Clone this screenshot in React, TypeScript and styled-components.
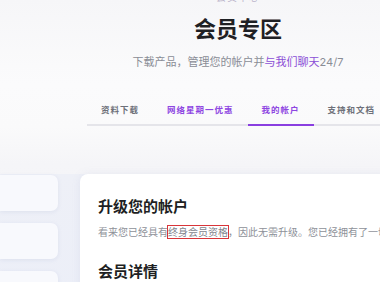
import React from "react";
import styled, { createGlobalStyle } from "styled-components";

const Global = createGlobalStyle`
  html, body { margin: 0; padding: 0; }
  body {
    background: #f8f8fa;
    font-family: Inter, "Noto Sans CJK SC", sans-serif;
  }
`;

const Page = styled.div`
  width: 380px;
  height: 282px;
  overflow: hidden;
  background: linear-gradient(180deg, #f6f6f8 0%, #fbfbfc 30%, #fafafb 45%, #f5f5f8 58%, #f1f2f6 100%);
`;

const Inner = styled.div`
  width: 476px;
`;

const Hero = styled.header`
  display: flex;
  flex-direction: column;
  align-items: center;
  text-align: center;
`;

const Eyebrow = styled.div`
  margin-top: -8px;
  font-size: 10px;
  line-height: 1;
  letter-spacing: 1px;
  color: #bdb6cc;
`;

const Title = styled.h1`
  margin: 16px 0 0;
  font-size: 22px;
  line-height: 1;
  font-weight: 700;
  color: #1f2024;
`;

const Subtitle = styled.p`
  margin: 17px 0 0;
  font-size: 11px;
  line-height: 1;
  color: #8a8d96;
`;

const Link = styled.span`
  color: #8b4fd6;
`;

const Tabs = styled.nav`
  display: flex;
  justify-content: center;
  margin-top: 38px;
`;

const TabRow = styled.div`
  display: flex;
  border-bottom: 2px solid #e5e5ea;
`;

const Tab = styled.div<{ $active?: boolean; $accent?: boolean }>`
  padding: 0 14px 9.5px;
  margin-bottom: -2px;
  font-size: 8.5px;
  line-height: 1;
  letter-spacing: 1px;
  font-weight: 700;
  color: ${(p) => (p.$active || p.$accent ? "#8e46e2" : "#6d7079")};
  border-bottom: 2px solid ${(p) => (p.$active ? "#8a3fe0" : "transparent")};
`;

const Content = styled.section`
  padding-top: 48px;
`;

const Row = styled.div`
  display: grid;
  grid-template-columns: 58px 1fr;
  column-gap: 22px;
  background: linear-gradient(180deg, #eef0f7 0%, #ebeef8 100%);
`;

const Sidebar = styled.aside`
  display: flex;
  flex-direction: column;
  gap: 12px;
  padding-top: 1px;
`;

const SideCard = styled.div`
  height: 36px;
  border-radius: 0 7px 7px 0;
  background: #f8f9fd;
  box-shadow: 0 1px 4px rgba(150, 160, 200, 0.18);
  filter: blur(0.4px);
`;

const Main = styled.main`
  background: #ffffff;
  border-radius: 8px 0 0 0;
  padding: 25px 0 0 18px;
  min-height: 140px;
  box-shadow: 0 0 8px rgba(140, 150, 190, 0.12);
`;

const SectionTitle = styled.h2<{ $gap?: number }>`
  margin: ${(p) => p.$gap ?? 0}px 0 0;
  font-size: 15px;
  line-height: 1;
  font-weight: 700;
  color: #1e1f23;
`;

const Body = styled.p`
  margin: 13px 0 0;
  font-size: 10px;
  line-height: 1;
  color: #8e9199;
  white-space: nowrap;
`;

const Marked = styled.span`
  outline: 1.5px solid #d8353a;
  outline-offset: 0.5px;
  color: #83868e;
`;

export default function App() {
  return (
    <>
      <Global />
      <Page>
        <Inner>
          <Hero>
            <Eyebrow>会员中心</Eyebrow>
            <Title>会员专区</Title>
            <Subtitle>
              下载产品，管理您的帐户并<Link>与我们聊天</Link>24/7
            </Subtitle>
          </Hero>
          <Tabs>
            <TabRow>
              <Tab>资料下载</Tab>
              <Tab $accent>网络星期一优惠</Tab>
              <Tab $active>我的帐户</Tab>
              <Tab>支持和文档</Tab>
            </TabRow>
          </Tabs>
          <Content>
            <Row>
              <Sidebar>
                <SideCard />
                <SideCard />
                <SideCard />
              </Sidebar>
              <Main>
                <SectionTitle>升级您的帐户</SectionTitle>
                <Body>
                  看来您已经具有<Marked>终身会员资格</Marked>，因此无需升级。您已经拥有了一切
                </Body>
                <SectionTitle $gap={27}>会员详情</SectionTitle>
              </Main>
            </Row>
          </Content>
        </Inner>
      </Page>
    </>
  );
}
